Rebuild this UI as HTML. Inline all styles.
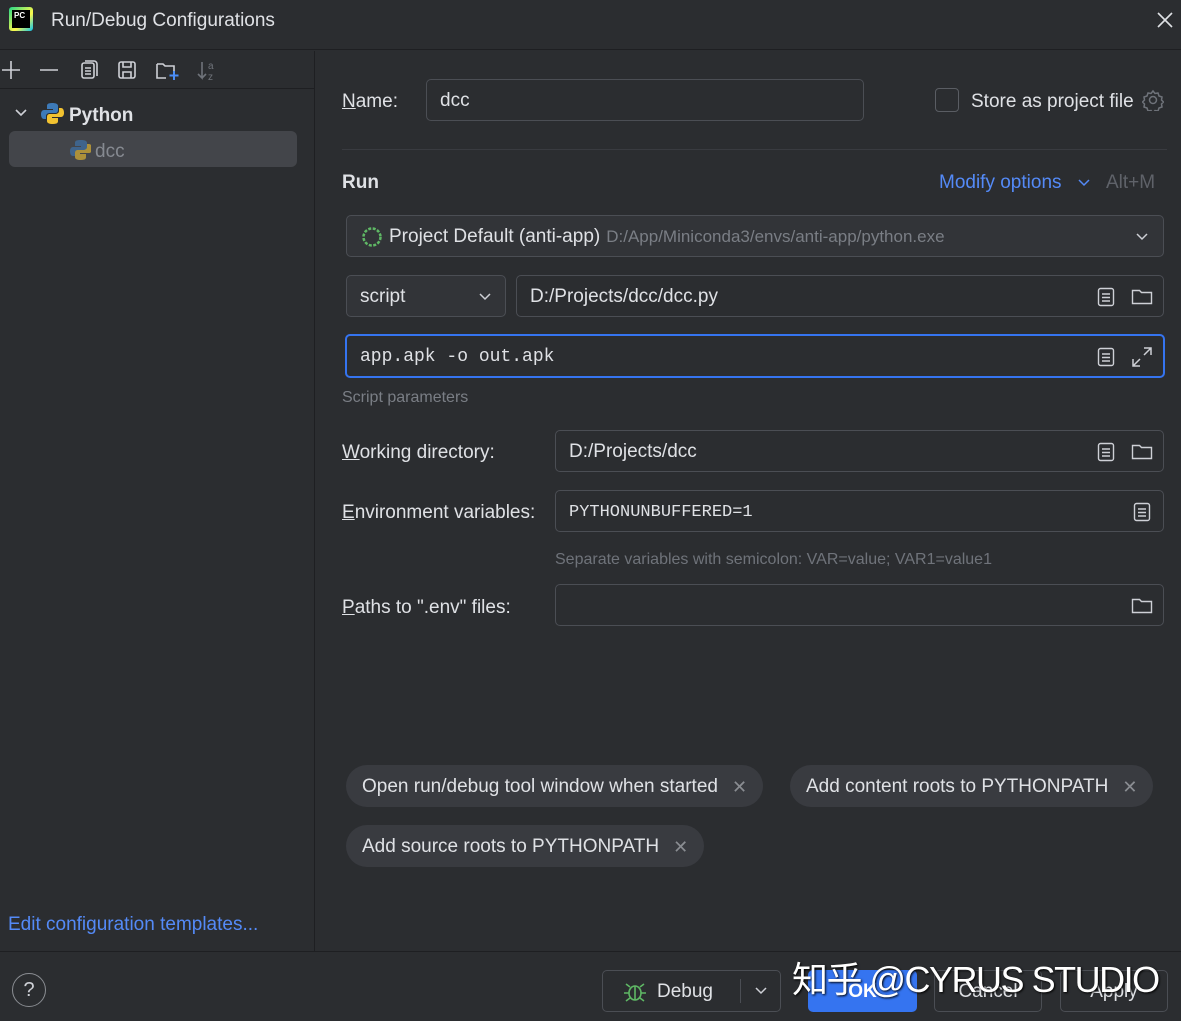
<!DOCTYPE html>
<html><head><meta charset="utf-8"><style>
*{box-sizing:border-box;margin:0;padding:0}
body{width:1181px;height:1021px;background:#2b2d30;color:#dfe1e5;font-family:"Liberation Sans","Noto Sans CJK SC",sans-serif;font-size:19px;position:relative;overflow:hidden}
.a{position:absolute}
.f{position:absolute;border:1.5px solid #4b4e54;border-radius:5px;background:#2b2d30;height:42px;display:flex;align-items:center;padding-left:13px;padding-top:2px;white-space:nowrap}
.mono{font-family:"Liberation Mono",monospace;font-size:18px}
.lbl{position:absolute;font-size:19px;color:#dfe1e5}
.chip{position:absolute;height:42px;border-radius:21px;background:#393b40;display:flex;align-items:center;padding:2px 16px 0;font-size:19px;color:#dfe1e5}
.chip span{color:#8a8d92;margin-left:14px;font-size:18px}
.btn{position:absolute;height:42px;border:1.5px solid #4b4e54;border-radius:5px;display:flex;align-items:center;justify-content:center;font-size:19px;color:#dfe1e5;padding-top:2px}
svg{display:block}
</style></head><body>
<div class="a" style="left:0;top:0;width:1181px;height:50px;background:#2b2d30;border-bottom:1px solid #1e1f22"></div>
<div class="a" style="left:9px;top:7px;width:24px;height:24px;background:linear-gradient(135deg,#21d789,#fcf84a 60%,#07c3f2);border-radius:3px"><div style="position:absolute;left:3px;top:3px;width:18px;height:18px;background:#000;color:#fff;font-size:8px;font-weight:bold;padding:1px 2px">PC</div></div>
<div class="a" style="left:51px;top:10px;font-size:19px">Run/Debug Configurations</div>
<svg class="a" style="left:1156px;top:11px" width="18" height="18" stroke="#dfe1e5" stroke-width="1.6"><path d="M2 2l14 14M16 2L2 16"/></svg>
<div class="a" style="left:0;top:51px;width:315px;height:900px;background:#2b2d30;border-right:1px solid #1e1f22"></div>
<div class="a" style="left:0;top:88px;width:315px;height:1px;background:#1e1f22"></div>
<svg class="a" style="left:0;top:58px" width="230" height="26" fill="none" stroke="#ced0d6" stroke-width="1.6">
<path d="M2 12h18M11 3v18"/><path d="M40 12h18"/>
<rect x="82" y="5" width="12" height="15" rx="2"/><path d="M85 3h9a3 3 0 0 1 3 3v12M85 10h6M85 13h6M85 16h6"/>
<rect x="119" y="4" width="16" height="16" rx="2"/><path d="M123 4v5h8V4M123 20v-6h8v6"/>
<path d="M157 6h6l2 2h9v5M157 6v14h9"/><path d="M174 13v9M169.5 17.5h9" stroke="#4b8df5" stroke-width="2"/>
<path d="M202 4v16l-4-4M202 20l4-4" stroke="#6f737a"/><text x="208" y="11" fill="#6f737a" stroke="none" font-size="10">a</text><text x="208" y="22" fill="#6f737a" stroke="none" font-size="10">z</text>
</svg>
<svg class="a" style="left:14px;top:106px" width="14" height="14" fill="none" stroke="#ced0d6" stroke-width="1.6"><path d="M2 4l5 5 5-5"/></svg>
<svg class="a" style="left:41px;top:102px" width="23" height="23"><path d="M11 1c-5 0-5 2-5 3v3h6v1H3C1 8 0 10 0 12c0 3 1 5 3 5h2v-3c0-2 2-3 4-3h5c2 0 3-1 3-3V4c0-2-2-3-6-3z" fill="#3d7ab8"/><path d="M12 22c5 0 5-2 5-3v-3h-6v-1h9c2 0 3-2 3-4 0-3-1-5-3-5h-2v3c0 2-2 3-4 3H9c-2 0-3 1-3 3v4c0 2 2 3 6 3z" fill="#f2c230"/></svg>
<div class="a" style="left:69px;top:105px;font-weight:bold;font-size:19px">Python</div>
<div class="a" style="left:9px;top:131px;width:288px;height:36px;background:#43454a;border-radius:6px"></div>
<svg class="a" style="left:70px;top:139px;opacity:.6" width="21" height="21"><path d="M10 1c-5 0-5 2-5 3v3h6v1H3C1 8 0 10 0 12c0 3 1 5 3 5h2v-3c0-2 2-3 4-3h5c2 0 3-1 3-3V4c0-2-2-3-6-3z" fill="#3d7ab8"/><path d="M11 21c5 0 5-2 5-3v-3h-6v-1h9c2 0 3-2 3-4 0-3-1-5-3-5h-2v3c0 2-2 3-4 3H8c-2 0-3 1-3 3v4c0 2 2 3 6 3z" fill="#f2c230"/></svg>
<div class="a" style="left:95px;top:141px;color:#868a91">dcc</div>
<div class="a" style="left:8px;top:914px;color:#548af7">Edit configuration templates...</div>
<div class="a" style="left:0;top:951px;width:1181px;height:70px;background:#2b2d30;border-top:1px solid #1e1f22"></div>
<div class="a" style="left:12px;top:973px;width:34px;height:34px;border:1.5px solid #8a8d92;border-radius:50%;text-align:center;line-height:33px;font-size:20px;color:#ced0d6">?</div>
<div class="btn" style="left:602px;top:970px;width:179px;justify-content:flex-start;padding-left:20px"><svg width="24" height="22" fill="none" stroke="#5fb865" stroke-width="1.6"><ellipse cx="12" cy="12" rx="6" ry="7"/><path d="M6 12H1M18 12h5M7 6L3 3M17 6l4-3M7 17l-4 3M17 17l4 3M12 5v14"/></svg><span style="margin-left:10px">Debug</span><span style="position:absolute;left:137px;top:8px;width:1px;height:24px;background:#4b4e54"></span><svg style="position:absolute;left:151px;top:15px" width="14" height="10" fill="none" stroke="#ced0d6" stroke-width="1.5"><path d="M2 2l5 5 5-5"/></svg></div>
<div class="btn" style="left:808px;top:970px;width:109px;background:#3574f0;border-color:#3574f0;font-weight:bold;color:#fff">OK</div>
<div class="btn" style="left:934px;top:970px;width:108px">Cancel</div>
<div class="btn" style="left:1060px;top:970px;width:108px">Apply</div>
<div class="a" style="left:792px;top:951px;font-size:36px;color:#fff;text-shadow:1px 1px 2px #000;white-space:nowrap;letter-spacing:-1.5px">知乎 @CYRUS STUDIO</div>
<div class="lbl" style="left:342px;top:91px"><u>N</u>ame:</div>
<div class="f" style="left:426px;top:79px;width:438px">dcc</div>
<div class="a" style="left:935px;top:88px;width:24px;height:24px;border:1.5px solid #5a5d63;border-radius:4px"></div>
<div class="lbl" style="left:971px;top:91px">Store as project file</div>
<svg class="a" style="left:1142px;top:89px" width="22" height="22" fill="none" stroke="#6f737a" stroke-width="1.5"><circle cx="11" cy="11" r="3.5"/><path d="M11 2l2 2.5 3-.5 1 3 3 1-.5 3 2 2-2 2 .5 3-3 1-1 3-3-.5-2 2.5-2-2.5-3 .5-1-3-3-1 .5-3-2-2 2-2-.5-3 3-1 1-3 3 .5z"/></svg>
<div class="a" style="left:342px;top:149px;width:825px;height:1px;background:#393b40"></div>
<div class="lbl" style="left:342px;top:172px;font-weight:bold">Run</div>
<div class="lbl" style="left:939px;top:172px;color:#548af7">Modify options</div>
<svg class="a" style="left:1077px;top:178px" width="14" height="10" fill="none" stroke="#548af7" stroke-width="1.5"><path d="M2 2l5 5 5-5"/></svg>
<div class="lbl" style="left:1106px;top:172px;color:#5f6269">Alt+M</div>
<div class="f" style="left:346px;top:215px;width:818px;background:#323438;padding-left:14px"><svg width="22" height="22" fill="none" stroke="#5fb865" stroke-width="2.5" stroke-dasharray="3 1.5"><circle cx="11" cy="11" r="8.5"/></svg><span style="margin-left:6px">Project Default (anti-app)</span><span style="margin-left:6px;color:#7a7e85;font-size:17px">D:/App/Miniconda3/envs/anti-app/python.exe</span><svg style="position:absolute;right:14px" width="14" height="10" fill="none" stroke="#ced0d6" stroke-width="1.5"><path d="M2 2l5 5 5-5"/></svg></div>
<div class="f" style="left:346px;top:275px;width:160px;background:#323438">script<svg style="position:absolute;right:13px" width="14" height="10" fill="none" stroke="#ced0d6" stroke-width="1.5"><path d="M2 2l5 5 5-5"/></svg></div>
<div class="f" style="left:516px;top:275px;width:648px">D:/Projects/dcc/dcc.py
<svg style="position:absolute;right:48px" width="18" height="20" fill="none" stroke="#ced0d6" stroke-width="1.4"><rect x="1.5" y="1.5" width="15" height="17" rx="2"/><path d="M5 7h8M5 10.5h8M5 14h8"/></svg>
<svg style="position:absolute;right:10px" width="22" height="18" fill="none" stroke="#ced0d6" stroke-width="1.4"><path d="M1.5 2.5h7l2 2h10v11h-19z"/></svg></div>
<div class="f mono" style="left:345px;top:334px;width:820px;height:44px;border:2.5px solid #3574f0">app.apk -o out.apk
<svg style="position:absolute;right:48px" width="18" height="20" fill="none" stroke="#ced0d6" stroke-width="1.4"><rect x="1.5" y="1.5" width="15" height="17" rx="2"/><path d="M5 7h8M5 10.5h8M5 14h8"/></svg>
<svg style="position:absolute;right:10px" width="22" height="22" fill="none" stroke="#ced0d6" stroke-width="1.5"><path d="M13 2h7v7M20 2l-7 7M9 20H2v-7M2 20l7-7"/></svg></div>
<div class="a" style="left:342px;top:389px;font-size:16px;color:#7a7e85">Script parameters</div>
<div class="lbl" style="left:342px;top:442px"><u>W</u>orking directory:</div>
<div class="f" style="left:555px;top:430px;width:609px">D:/Projects/dcc
<svg style="position:absolute;right:48px" width="18" height="20" fill="none" stroke="#ced0d6" stroke-width="1.4"><rect x="1.5" y="1.5" width="15" height="17" rx="2"/><path d="M5 7h8M5 10.5h8M5 14h8"/></svg>
<svg style="position:absolute;right:10px" width="22" height="18" fill="none" stroke="#ced0d6" stroke-width="1.4"><path d="M1.5 2.5h7l2 2h10v11h-19z"/></svg></div>
<div class="lbl" style="left:342px;top:502px"><u>E</u>nvironment variables:</div>
<div class="f mono" style="left:555px;top:490px;width:609px;font-size:17px">PYTHONUNBUFFERED=1
<svg style="position:absolute;right:12px" width="18" height="20" fill="none" stroke="#ced0d6" stroke-width="1.4"><rect x="1.5" y="1.5" width="15" height="17" rx="2"/><path d="M5 7h8M5 10.5h8M5 14h8"/></svg></div>
<div class="a" style="left:555px;top:551px;font-size:16px;color:#6f737a">Separate variables with semicolon: VAR=value; VAR1=value1</div>
<div class="lbl" style="left:342px;top:597px"><u>P</u>aths to ".env" files:</div>
<div class="f" style="left:555px;top:584px;width:609px">
<svg style="position:absolute;right:10px" width="22" height="18" fill="none" stroke="#ced0d6" stroke-width="1.4"><path d="M1.5 2.5h7l2 2h10v11h-19z"/></svg></div>
<div class="chip" style="left:346px;top:765px">Open run/debug tool window when started<span>✕</span></div>
<div class="chip" style="left:790px;top:765px">Add content roots to PYTHONPATH<span>✕</span></div>
<div class="chip" style="left:346px;top:825px">Add source roots to PYTHONPATH<span>✕</span></div>
</body></html>
